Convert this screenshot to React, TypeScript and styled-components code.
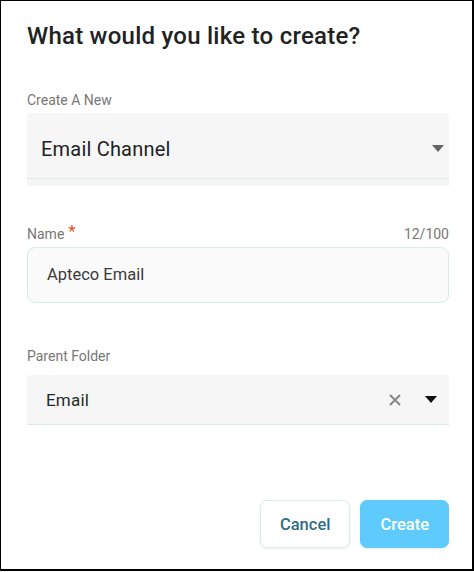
import React from "react";
import styled, { createGlobalStyle } from "styled-components";

const Global = createGlobalStyle`
  html, body { margin: 0; padding: 0; background: #fff; }
  body { font-family: Roboto, "Noto Sans", sans-serif; }
  * { box-sizing: border-box; }
`;

const Dialog = styled.div`
  width: 474px;
  height: 571px;
  border-style: solid;
  border-color: #000;
  border-width: 1px 2px 2px 1px;
  background: #fff;
  padding: 21px 23px 0 26px;
  display: flex;
  flex-direction: column;
`;

const Title = styled.h1`
  margin: 0;
  font-size: 24px;
  font-weight: 500;
  color: #222;
  line-height: 28px;
  letter-spacing: 0.25px;
`;

const Field = styled.div<{ $top: number }>`
  margin-top: ${(p) => p.$top}px;
  display: flex;
  flex-direction: column;
`;

const LabelRow = styled.div<{ $gap: number }>`
  display: flex;
  justify-content: space-between;
  align-items: baseline;
  font-size: 14px;
  color: #777;
  line-height: 16px;
  margin-bottom: ${(p) => p.$gap}px;
`;

const Star = styled.span`
  color: #e8501e;
  margin-left: 4px;
  font-size: 17px;
  line-height: 0;
  position: relative;
  top: -2px;
`;

const FilledSelect = styled.div<{ $height: number; $padRight: number; $padTop: number }>`
  height: ${(p) => p.$height}px;
  background: #f6f6f6;
  border-radius: 4px 4px 0 0;
  border-bottom: 1px solid #d7ebe9;
  display: flex;
  align-items: center;
  padding: ${(p) => p.$padTop}px ${(p) => p.$padRight}px 0 14px;
`;

const Helper = styled.div`
  height: 7px;
  background: #f6f6f6;
`;

const SelectText = styled.span<{ $size: number; $color: string; $indent: number }>`
  flex: 1;
  font-size: ${(p) => p.$size}px;
  color: ${(p) => p.$color};
  letter-spacing: 0.2px;
  padding-left: ${(p) => p.$indent}px;
`;

const Outlined = styled.div`
  height: 56px;
  background: #fafafa;
  border: 1px solid #d9ecec;
  border-radius: 8px;
  display: flex;
  align-items: center;
  padding: 0 19px 2px;
  font-size: 16.5px;
  color: #3a3a3a;
`;

const IconBox = styled.span<{ $gapRight?: number }>`
  display: inline-flex;
  width: 20px;
  justify-content: center;
  align-items: center;
  margin-right: ${(p) => p.$gapRight ?? 0}px;
`;

const Footer = styled.div`
  margin-top: auto;
  margin-bottom: 21px;
  display: flex;
  justify-content: flex-end;
  gap: 10px;
`;

const Button = styled.button<{ $primary?: boolean }>`
  height: 48px;
  padding: 0 19px;
  border-radius: 7px;
  font-family: Roboto, sans-serif;
  font-size: 16.5px;
  font-weight: 500;
  border: 1px solid ${(p) => (p.$primary ? "#5ecbfc" : "#d8ebee")};
  background: ${(p) => (p.$primary ? "#5ecbfc" : "#fff")};
  color: ${(p) => (p.$primary ? "#fff" : "#2d6c88")};
  box-shadow: 0 1px 3px rgba(0, 0, 0, 0.08);
`;

const Caret = ({ color }: { color: string }) => (
  <svg width="12" height="7" viewBox="0 0 12 7">
    <path d="M0 0 L12 0 L6 7 Z" fill={color} />
  </svg>
);

export default function App() {
  return (
    <>
      <Global />
      <Dialog>
        <Title>What would you like to create?</Title>
        <Field $top={42}>
          <LabelRow $gap={5}>Create A New</LabelRow>
          <FilledSelect $height={66} $padRight={1} $padTop={6}>
            <SelectText $size={20} $color="#222" $indent={0}>
              Email Channel
            </SelectText>
            <IconBox>
              <Caret color="#666" />
            </IconBox>
          </FilledSelect>
          <Helper />
        </Field>
        <Field $top={40}>
          <LabelRow $gap={5}>
            <span>
              Name<Star>*</Star>
            </span>
            <span>12/100</span>
          </LabelRow>
          <Outlined>Apteco Email</Outlined>
        </Field>
        <Field $top={45}>
          <LabelRow $gap={11}>Parent Folder</LabelRow>
          <FilledSelect $height={50} $padRight={8} $padTop={0}>
            <SelectText $size={17} $color="#1f2b2b" $indent={5}>
              Email
            </SelectText>
            <IconBox $gapRight={16}>
              <svg width="12" height="12" viewBox="0 0 12 12">
                <path d="M1 1 L11 11 M11 1 L1 11" stroke="#888" strokeWidth="2" />
              </svg>
            </IconBox>
            <IconBox>
              <Caret color="#111" />
            </IconBox>
          </FilledSelect>
        </Field>
        <Footer>
          <Button>Cancel</Button>
          <Button $primary>Create</Button>
        </Footer>
      </Dialog>
    </>
  );
}
